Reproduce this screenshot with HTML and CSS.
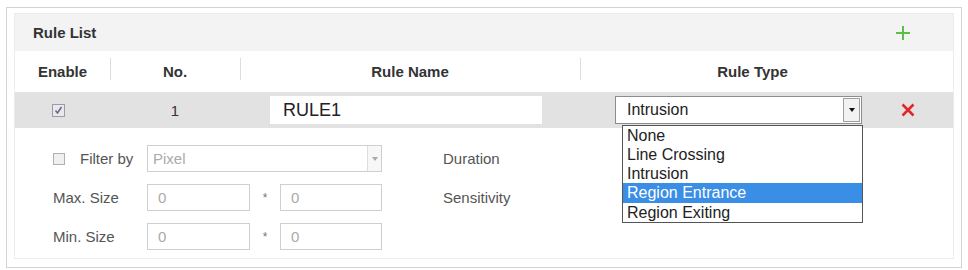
FILE: index.html
```html
<!DOCTYPE html>
<html lang="en">
<head>
  <meta charset="UTF-8" />
  <title>Rule List</title>
  <link rel="stylesheet" href="styles.css">
</head>
<body>
  <!-- ===== RULE PANEL ===== -->
  <div class="panel">
    <div class="inner">
      <div class="title">
        <span>Rule List</span>
        <svg class="add" width="16" height="16" viewBox="0 0 16 16">
          <path d="M8 1v14M1 8h14" stroke="#5cbf4a" stroke-width="2" fill="none"/>
        </svg>
      </div>

      <div class="thead">
        <div class="th">Enable</div>
        <div class="th sep">No.</div>
        <div class="th sep">Rule Name</div>
        <div class="th sep">Rule Type</div>
        <div class="th"></div>
      </div>

      <div class="rule-row">
        <div class="cell">
          <span class="check on">
            <svg width="11" height="11" viewBox="0 0 11 11"><path d="M2.5 5.5l2 2.5 4-6" stroke="#6a6a80" stroke-width="1.6" fill="none"/></svg>
          </span>
        </div>
        <div class="cell">1</div>
        <div class="cell left"><div class="text-input">RULE1</div></div>
        <div class="cell left">
          <div class="select">
            <span>Intrusion</span>
            <span class="arrow"><i></i></span>
            <ul class="options">
              <li>None</li>
              <li>Line Crossing</li>
              <li>Intrusion</li>
              <li class="hl">Region Entrance</li>
              <li>Region Exiting</li>
            </ul>
          </div>
        </div>
        <div class="cell">
          <svg width="16" height="16" viewBox="0 0 16 16">
            <path d="M2.5 2.5l11 11M13.5 2.5l-11 11" stroke="#e3262b" stroke-width="2.6" fill="none"/>
          </svg>
        </div>
      </div>

      <div class="details">
        <label class="lbl"><span class="check"></span>Filter by</label>
        <div class="select small disabled wide"><span>Pixel</span><span class="arrow"><i></i></span></div>
        <div></div>
        <div class="lbl">Duration</div>

        <div class="lbl">Max. Size</div>
        <div class="field">0</div>
        <div class="star">*</div>
        <div class="field">0</div>
        <div></div>
        <div class="lbl">Sensitivity</div>

        <div class="lbl">Min. Size</div>
        <div class="field">0</div>
        <div class="star">*</div>
        <div class="field">0</div>
      </div>
    </div>
  </div>
</body>
</html>
```

FILE: styles.css
```css
:root {
  --border: #d3d3d3;
  --band: #f3f3f3;
  --row: #e2e2e2;
  --text: #333333;
  --muted: #555555;
}
* { box-sizing: border-box; margin: 0; padding: 0; }

body {
  font-family: "Liberation Sans", Arial, sans-serif;
  background: #ffffff;
  color: var(--text);
}

/* ===== PANEL ===== */
.panel {
  margin: 7px 6px 0;
  border: 1px solid var(--border);
  padding: 5px 7px 8px;
}
.inner { border: 1px solid #ececec; }

.title {
  height: 37px;
  background: var(--band);
  display: flex;
  align-items: center;
  justify-content: space-between;
  padding: 0 42px 0 18px;
  font-size: 15px;
  font-weight: bold;
}

/* ===== TABLE ===== */
.thead, .rule-row { display: grid; }
.thead {
  grid-template-columns: 95px 130px 340px 345px 28px;
  height: 41px;
  background: #ffffff;
}
.th {
  display: flex;
  align-items: center;
  justify-content: center;
  font-size: 15px;
  font-weight: bold;
  position: relative;
}
.th.sep::before {
  content: "";
  position: absolute;
  left: 0;
  top: 7px;
  height: 22px;
  border-left: 1px solid #dddddd;
}

.rule-row {
  grid-template-columns: 95px 130px 340px 282px 91px;
  height: 36px;
  background: var(--row);
}
.cell {
  display: flex;
  align-items: center;
  justify-content: center;
  font-size: 15px;
}
.cell.left { justify-content: flex-start; }

.text-input {
  margin-left: 30px;
  width: 272px;
  height: 28px;
  background: #ffffff;
  font-size: 18px;
  line-height: 28px;
  padding-left: 13px;
  color: #222222;
}

.check {
  display: inline-flex;
  align-items: center;
  justify-content: center;
  width: 12px;
  height: 12px;
  border: 1px solid #b0b0b8;
  background: #f0f0f0;
}
.check.on {
  width: 13px;
  height: 13px;
  margin-left: -8px;
  border-color: #9a9aa8;
  background: #e8e8ee;
}

/* ===== SELECT ===== */
.select {
  position: relative;
  margin-left: 35px;
  width: 247px;
  height: 28px;
  background: #ffffff;
  border: 1px solid #8d8d8d;
  font-size: 16px;
  line-height: 26px;
  padding-left: 11px;
  color: #222222;
}
.select .arrow {
  position: absolute;
  right: 1px;
  top: 1px;
  width: 17px;
  height: 24px;
  border: 1px solid #a0a0a0;
  background: #f2f2f2;
  display: flex;
  align-items: center;
  justify-content: center;
}
.select .arrow i {
  border-left: 3.5px solid transparent;
  border-right: 3.5px solid transparent;
  border-top: 4px solid #111111;
}

.options {
  list-style: none;
  position: absolute;
  left: 6px;
  top: 28px;
  width: 241px;
  background: #ffffff;
  border: 1px solid #555555;
  font-size: 16px;
  line-height: 19px;
  z-index: 10;
}
.options li { padding-left: 4px; height: 19px; }
.options li.hl { background: #3a8ee6; color: #ffffff; height: 20px; }

/* ===== DETAILS ===== */
.details {
  display: grid;
  grid-template-columns: 94px 103px 30px 102px 61px auto;
  grid-auto-rows: 27px;
  row-gap: 12px;
  padding: 17px 0 8px 38px;
  align-items: center;
  font-size: 15px;
  color: var(--muted);
}
.lbl { display: flex; align-items: center; gap: 15px; }
.select.small {
  margin-left: 0;
  width: 235px;
  height: 27px;
  line-height: 25px;
  padding-left: 5px;
  border-color: #cfcfcf;
  font-size: 15px;
}
.select.wide { grid-column: 2 / 5; }
.select.disabled { color: #aaaaaa; }
.select.disabled .arrow {
  border: none;
  border-left: 1px solid #dddddd;
  background: #f7f7f7;
  height: 25px;
  top: 0;
  right: 0;
  width: 14px;
}
.select.disabled .arrow i { border-top-color: #aaaaaa; }

.field {
  height: 27px;
  border: 1px solid #cfcfcf;
  padding-left: 10px;
  line-height: 25px;
  color: #aaaaaa;
}
.star { text-align: center; color: #777777; font-size: 12px; }
```
